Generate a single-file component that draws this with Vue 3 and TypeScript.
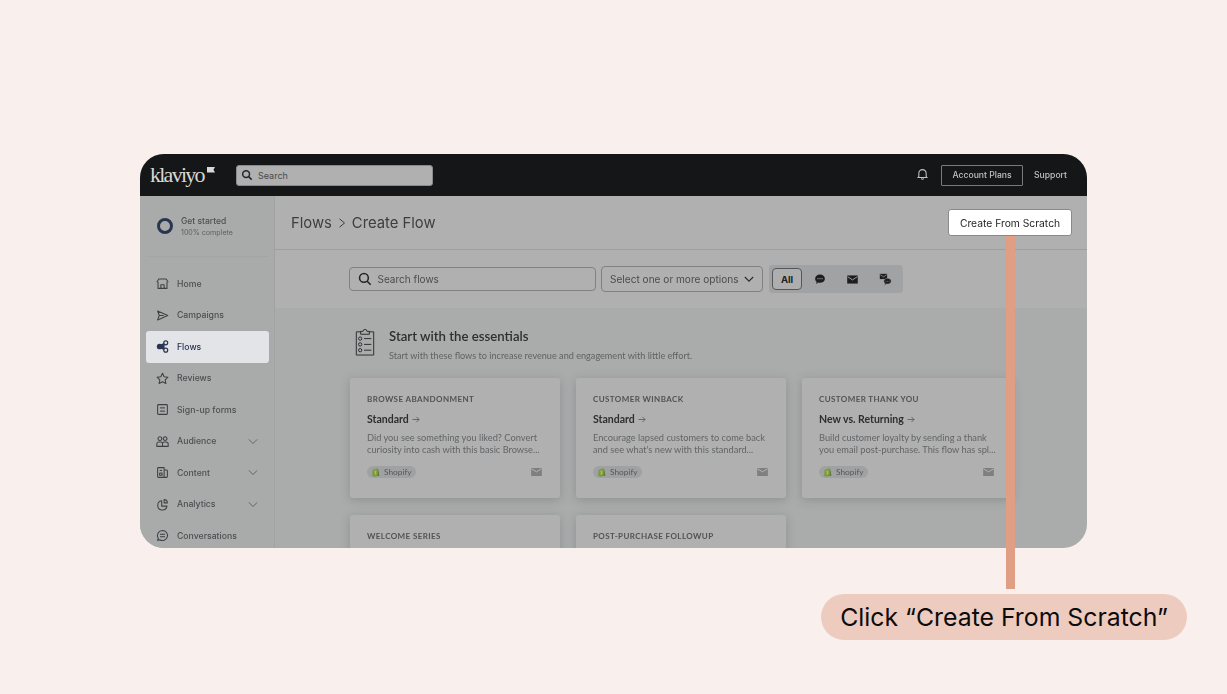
<script setup lang="ts">
interface NavItem { label: string; paths: string[]; active?: boolean; chevron?: boolean }
interface Card { label: string; title?: string; lines?: [string, string] }

const nav: NavItem[] = [
  { label: 'Home', paths: ['M1 6.500 3.500 2.500h9L15 6.500', 'M2.500 6v8h11V6', 'M6 14V9.500h4V14'] },
  { label: 'Campaigns', paths: ['M2 2.500 14.500 8 2 13.500 4 8 2 2.500Z', 'M4 8h5.500'] },
  { label: 'Flows', active: true, paths: [] },
  { label: 'Reviews', paths: ['M8 1.500l2 4.300 4.700.6-3.400 3.200.9 4.600L8 11.900l-4.200 2.300.9-4.600L1.300 6.400 6 5.800 8 1.500Z'] },
  { label: 'Sign-up forms', paths: ['M3 2h10a1 1 0 0 1 1 1v10a1 1 0 0 1-1 1H3a1 1 0 0 1-1-1V3a1 1 0 0 1 1-1Z', 'M5 6h6', 'M5 10h6'] },
  { label: 'Audience', chevron: true, paths: ['M2.500 4.500a2.300 2.300 0 1 0 4.600 0 2.300 2.300 0 1 0-4.600 0Z', 'M8.900 4.500a2.300 2.300 0 1 0 4.600 0 2.300 2.300 0 1 0-4.600 0Z', 'M1 14v-3a2.500 2.500 0 0 1 2.500-2.500h2.500A2 2 0 0 1 8 10.500V14Z', 'M8 14h7v-3a2.500 2.500 0 0 0-2.500-2.500H10a2 2 0 0 0-2 2'] },
  { label: 'Content', chevron: true, paths: ['M3 2h7v12H3a1 1 0 0 1-1-1V3a1 1 0 0 1 1-1Z', 'M10 5h3a1 1 0 0 1 1 1v7a1 1 0 0 1-1 1h-3', 'M4.500 5.500h3', 'M4.500 8.500h3v3h-3Z'] },
  { label: 'Analytics', chevron: true, paths: ['M7 3.500a5.700 5.700 0 1 0 6.500 6.500H7V3.500Z', 'M10 2a4 4 0 0 1 4 4h-4V2Z'] },
  { label: 'Conversations', paths: ['M8 1.800a6.200 6.200 0 1 1-3.400 11.400L2 14l.8-2.700A6.200 6.200 0 0 1 8 1.800Z', 'M5 6.500h6', 'M5 9.500h6'] },
]

const cards: Card[] = [
  { label: 'Browse Abandonment', title: 'Standard', lines: ['Did you see something you liked? Convert', 'curiosity into cash with this basic Browse...'] },
  { label: 'Customer Winback', title: 'Standard', lines: ['Encourage lapsed customers to come back', "and see what's new with this standard..."] },
  { label: 'Customer Thank You', title: 'New vs. Returning', lines: ['Build customer loyalty by sending a thank', 'you email post-purchase. This flow has spl...'] },
  { label: 'Welcome Series' },
  { label: 'Post-Purchase Followup' },
]
</script>

<template>
  <div class="page">
    <div class="window">
      <header class="topbar">
        <span class="logo">klaviyo<svg class="flag" viewBox="0 0 8 6" width="8" height="6"><path d="M0 0h8L6.500 2.800 8 5.600H0Z" fill="#d8d8d4" /></svg></span>
        <div class="top-search">
          <svg viewBox="0 0 16 16" width="12" height="12" fill="none" stroke="#232527" stroke-width="2"><circle cx="6.800" cy="6.800" r="4.600" /><path d="m10.200 10.200 4 4" /></svg>
          <span>Search</span>
        </div>
        <svg class="bell" viewBox="0 0 16 16" width="13" height="13" fill="none" stroke="#c4c4c4" stroke-width="1.300"><path d="M3.500 10.500V6.500a4.500 4.500 0 0 1 9 0v4l1 1.300h-11Z" /><path d="M6.500 13a1.700 1.700 0 0 0 3 0" /></svg>
        <span class="plans">Account Plans</span>
        <span class="support">Support</span>
      </header>
      <div class="body">
        <aside class="sidebar">
          <div class="progress">
            <span class="ring"></span>
            <div class="p-text">
              <div class="p-title">Get started</div>
              <div class="p-sub">100% complete</div>
            </div>
          </div>
          <nav class="nav">
            <div v-for="item in nav" :key="item.label" class="nav-item" :class="{ active: item.active }">
              <svg v-if="item.active" viewBox="0 0 16 16" width="13" height="13" fill="none" stroke="#2a3550" stroke-width="1.500">
                <path d="M10.500 3 1.500 8l9 5Z" fill="#2a3550" stroke="none" /><circle cx="4.500" cy="8" r="3.500" fill="#2a3550" stroke="none" /><circle cx="12" cy="3.500" r="2.400" fill="#e2e4e8" /><circle cx="12" cy="12.500" r="2.400" fill="#e2e4e8" />
              </svg>
              <svg v-else viewBox="0 0 16 16" width="13" height="13" fill="none" stroke="#3e4143" stroke-width="1.300" stroke-linejoin="round">
                <path v-for="d in item.paths" :key="d" :d="d" />
              </svg>
              <span class="nav-label">{{ item.label }}</span>
              <svg v-if="item.chevron" class="chev" viewBox="0 0 12 8" width="10" height="7" fill="none" stroke="#56595b" stroke-width="1"><path d="m1 1.500 5 5 5-5" /></svg>
            </div>
          </nav>
        </aside>
        <main class="main">
          <div class="head">
            <div class="crumbs">
              <span>Flows</span>
              <svg class="sep" viewBox="0 0 8 10" width="8" height="10" fill="none" stroke="#3c3e40" stroke-width="1"><path d="m1.500 .8 5 4.200-5 4.200" /></svg>
              <span>Create Flow</span>
            </div>
            <button class="create" type="button">Create From Scratch</button>
          </div>
          <div class="filters">
            <div class="search">
              <svg viewBox="0 0 16 16" width="14" height="14" fill="none" stroke="#232527" stroke-width="1.800"><circle cx="6.800" cy="6.800" r="5" /><path d="m10.500 10.500 4 4" /></svg>
              <span>Search flows</span>
            </div>
            <div class="select">
              <span>Select one or more options</span>
              <svg viewBox="0 0 12 8" width="10" height="7" fill="none" stroke="#2a2c2e" stroke-width="1.300"><path d="m1 1 5 5 5-5" /></svg>
            </div>
            <div class="seg">
              <span class="seg-all">All</span>
              <svg class="seg-ic" viewBox="0 0 16 16" width="12" height="12"><path d="M8 2c3.700 0 6.500 2.400 6.500 5.500S11.700 13 8 13c-.8 0-1.500-.1-2.200-.3L3 14.500l.5-3C2.200 10.500 1.500 9.100 1.500 7.500 1.500 4.400 4.300 2 8 2Z" fill="#1c1e20" /><circle cx="5.300" cy="7.500" r=".8" fill="#aaa" /><circle cx="8" cy="7.500" r=".8" fill="#aaa" /><circle cx="10.700" cy="7.500" r=".8" fill="#aaa" /></svg>
              <svg class="seg-ic" viewBox="0 0 16 16" width="13" height="13"><path d="M1.500 3h13v10h-13Z" fill="#1c1e20" /><path d="m2 4.500 6 4 6-4" fill="none" stroke="#aaa" stroke-width="1.100" /></svg>
              <svg class="seg-ic" viewBox="0 0 16 16" width="13" height="13"><path d="M1 1h9v6.500H1Z" fill="#1c1e20" /><path d="m1.500 2 4 2.800L9.500 2" fill="none" stroke="#aaa" stroke-width=".8" /><path d="M10.500 6.500c2.500 0 4.500 1.500 4.500 3.500s-2 3.500-4.500 3.500c-.4 0-.8 0-1.200-.1L7 15l.3-2.300C6.400 12 5.900 11 5.900 10c0-2 2-3.500 4.600-3.500Z" fill="#1c1e20" stroke="#a0a2a4" stroke-width=".6" /><circle cx="8.500" cy="10" r=".6" fill="#aaa" /><circle cx="10.500" cy="10" r=".6" fill="#aaa" /><circle cx="12.500" cy="10" r=".6" fill="#aaa" /></svg>
            </div>
          </div>
          <section class="content">
            <div class="intro">
              <svg class="clip" viewBox="0 0 20 30" width="20" height="29" fill="none" stroke="#2b2d2f" stroke-width="1">
                <path d="M6 5H1v24h18V5h-5" /><path d="M5.500 7.500V4.500h2.500a2 2 0 0 1 4 0h2.500v3Z" />
                <circle cx="5" cy="12" r="1.700" /><circle cx="5" cy="18" r="1.700" /><circle cx="5" cy="24" r="1.700" />
                <path d="M9 12h7.500M9 18h7.500M9 24h7.500" />
              </svg>
              <div class="intro-text">
                <h2>Start with the essentials</h2>
                <p>Start with these flows to increase revenue and engagement with little effort.</p>
              </div>
            </div>
            <div class="grid">
              <article v-for="c in cards" :key="c.label" class="card">
                <div class="c-label">{{ c.label }}</div>
                <template v-if="c.title && c.lines">
                  <div class="c-title">{{ c.title }}
                    <svg class="arrow" viewBox="0 0 9 8" width="8" height="7" fill="none" stroke="#5c5e60" stroke-width="1"><path d="M.5 4h7.500M5 1l3 3-3 3" /></svg>
                  </div>
                  <p class="c-desc">{{ c.lines[0] }}<br />{{ c.lines[1] }}</p>
                  <div class="c-foot">
                    <span class="chip">
                      <svg viewBox="0 0 12 14" width="8" height="10"><path d="M1 3.500 7.500 1.500 9 2l2 10.500-7.500 1.500L0 12.800Z" fill="#7d9a3c" /><path d="M9 2l2 10.500-2.500.5Z" fill="#5a7a2e" /><path d="M6.500 5.800c-1.500-.5-2.500.2-2.300 1 .2.900 2 .9 2 2 0 1-1.300 1.400-2.300.8" fill="none" stroke="#e6e6e0" stroke-width=".8" /></svg>
                      Shopify
                    </span>
                    <svg class="c-mail" viewBox="0 0 12 9" width="11" height="8"><path d="M0 0h12v9H0Z" fill="#7d7f81" /><path d="m.5 1 5.500 3.300L11.500 1" fill="none" stroke="#c0c0c0" stroke-width=".9" /></svg>
                  </div>
                </template>
              </article>
            </div>
          </section>
        </main>
      </div>
    </div>
    <div class="callout">Click “Create From Scratch”</div>
    <span class="connector"></span>
  </div>
</template>

<style>
html, body { margin: 0; background: #f9f0ed; }
</style>

<style scoped>
.page {
  position: relative;
  width: 1227px;
  height: 694px;
  box-sizing: border-box;
  padding: 154px 0 0 140px;
  background: #f9f0ed;
  font-family: Inter, "Liberation Sans", sans-serif;
  overflow: hidden;
}
.window {
  width: 947px;
  height: 393.5px;
  border-radius: 24px;
  overflow: hidden;
  background: #a9acab;
  display: flex;
  flex-direction: column;
  filter: blur(0.3px);
}
.topbar {
  flex: none;
  height: 42px;
  background: #141618;
  display: flex;
  align-items: center;
  padding: 0 20px 0 10px;
  color: #c2c2c2;
}
.logo {
  width: 86px;
  font-family: "Liberation Serif", serif;
  font-size: 22px;
  color: #d8d8d4;
  letter-spacing: -1.75px;
  display: flex;
  align-items: flex-start;
}
.flag { margin: 5px 0 0 3px; }
.top-search {
  width: 197px;
  height: 21px;
  box-sizing: border-box;
  background: #b0b0b0;
  border: 1px solid #8a8a8a;
  border-radius: 3px;
  display: flex;
  align-items: center;
  gap: 5px;
  padding-left: 4px;
  font-size: 9px;
  color: #47494b;
}
.bell { margin: -1px 12px 0 auto; }
.plans {
  height: 21px;
  width: 82px;
  box-sizing: border-box;
  border: 1px solid #7a7a7a;
  border-radius: 1px;
  display: flex;
  align-items: center;
  justify-content: center;
  font-size: 8.6px;
  font-weight: 500;
}
.support { margin-left: 11px; font-size: 8.6px; font-weight: 500; }
.body { flex: 1; display: flex; min-height: 0; }
.sidebar {
  flex: none;
  width: 135px;
  box-sizing: border-box;
  background: #a8abaa;
  border-right: 1px solid #a1a3a2;
}
.progress {
  height: 61px;
  box-sizing: border-box;
  margin: 0 5px 0 6px;
  border-bottom: 1px solid #a2a6a5;
  display: flex;
  align-items: center;
  gap: 8px;
  padding: 0 0 0 11px;
}
.p-text { padding-top: 2px; }
.ring {
  width: 16px;
  height: 16px;
  box-sizing: border-box;
  border: 3px solid #2a3550;
  border-radius: 50%;
}
.p-title { font-size: 8.5px; font-weight: 500; color: #4d5052; line-height: 11px; }
.p-sub { font-size: 7.1px; color: #5d6062; line-height: 11px; }
.nav { padding-top: 11px; display: flex; flex-direction: column; }
.nav-item {
  height: 31.5px;
  box-sizing: border-box;
  margin: 0 5px 0 6px;
  padding: 0 10px;
  display: flex;
  align-items: center;
  gap: 8px;
  font-size: 8.7px;
  font-weight: 500;
  color: #4c4f51;
  border-radius: 3px;
}
.nav-item.active { background: #e2e4e8; color: #2a3550; }
.nav-label { flex: 1; }
.chev { margin-right: 1px; }
.main { flex: 1; min-width: 0; display: flex; flex-direction: column; }
.head {
  flex: none;
  height: 54px;
  box-sizing: border-box;
  background: #b0b0b0;
  border-bottom: 1px solid #9e9e9e;
  display: flex;
  align-items: center;
  justify-content: space-between;
  padding: 0 15px 0 16px;
}
.crumbs { font-size: 14.8px; color: #3c3e40; display: flex; align-items: center; gap: 6px; }
.create {
  width: 124px;
  height: 27px;
  background: #fff;
  border: 1px solid #8a8a8a;
  border-radius: 3px;
  font: 400 10.3px Inter, sans-serif;
  color: #1e2022;
  padding: 0;
}
.filters {
  flex: none;
  height: 58px;
  box-sizing: border-box;
  background: #b0b0b0;
  display: flex;
  align-items: center;
  padding: 0 0 0 74px;
  gap: 5px;
}
.search {
  width: 247px;
  height: 24px;
  box-sizing: border-box;
  border: 1px solid #7f8183;
  border-radius: 4px;
  display: flex;
  align-items: center;
  gap: 5.5px;
  padding-left: 8px;
  font-size: 10px;
  color: #4a4c4e;
}
.select {
  width: 162px;
  height: 26px;
  box-sizing: border-box;
  border: 1px solid #7f8183;
  border-radius: 4px;
  display: flex;
  align-items: center;
  justify-content: space-between;
  padding: 0 8px;
  font-size: 10.1px;
  color: #4a4c4e;
}
.seg {
  width: 134px;
  height: 28px;
  box-sizing: border-box;
  margin-left: 1px;
  background: #a0a2a4;
  border-radius: 4px;
  display: flex;
  align-items: center;
  padding-left: 3px;
}
.seg-all {
  width: 30px;
  height: 22px;
  box-sizing: border-box;
  border: 1px solid #55585a;
  border-radius: 4px;
  display: flex;
  align-items: center;
  justify-content: center;
  background: #aeaeae;
  font-size: 9.5px;
  font-weight: 700;
  color: #1e2022;
}
.seg-ic { margin-left: 12px; }
.seg-ic + .seg-ic { margin-left: 20px; }
.content { flex: 1; min-height: 0; padding: 0 0 0 75px; overflow: hidden; }
.intro { display: flex; gap: 14px; padding: 19px 0 0 5px; height: 51px; }
.clip { flex: none; }
.intro-text { padding-top: 1px; }
.intro h2 {
  margin: 0;
  font: 600 13.2px Lato, sans-serif;
  color: #2c2e30;
  line-height: 16px;
}
.intro p {
  margin: 5.5px 0 0;
  font: 400 9.15px Lato, sans-serif;
  color: #606264;
  line-height: 12px;
}
.grid {
  display: grid;
  grid-template-columns: repeat(3, 210px);
  grid-auto-rows: 120px;
  column-gap: 16px;
  row-gap: 16.5px;
  width: 662px;
}
.card {
  box-sizing: border-box;
  background: #b0b0b0;
  border-radius: 3px;
  box-shadow: 0 2px 10px rgba(70, 75, 80, 0.28);
  padding: 16px 17px 0;
  font-family: Lato, sans-serif;
}
.c-label {
  font-size: 8px;
  font-weight: 700;
  letter-spacing: 0.4px;
  text-transform: uppercase;
  color: #505254;
  line-height: 10px;
}
.c-title { margin-top: 8px; font-size: 10.5px; font-weight: 700; color: #2c2e30; line-height: 14px; }
.arrow { margin-left: 1px; }
.c-desc { margin: 5.5px 0 0; font-size: 9.25px; color: #626466; line-height: 12px; white-space: nowrap; }
.c-foot { margin-top: 10.5px; display: flex; align-items: center; justify-content: space-between; }
.chip {
  width: 49px;
  height: 12px;
  box-sizing: border-box;
  background: #9fa1a3;
  border-radius: 6px;
  display: flex;
  align-items: center;
  gap: 4px;
  padding-left: 5px;
  font-size: 8.3px;
  color: #55575a;
}
.c-mail { margin-right: 1px; }
.connector {
  position: absolute;
  left: 1006px;
  top: 236px;
  width: 9px;
  height: 352.5px;
  background: #e09e85;
}
.callout {
  margin: 46.5px 0 0 681px;
  width: 366px;
  height: 46px;
  border-radius: 23px;
  background: #eecbbf;
  display: flex;
  align-items: center;
  justify-content: center;
  font-size: 24.8px;
  color: #0c0c0c;
}
</style>
